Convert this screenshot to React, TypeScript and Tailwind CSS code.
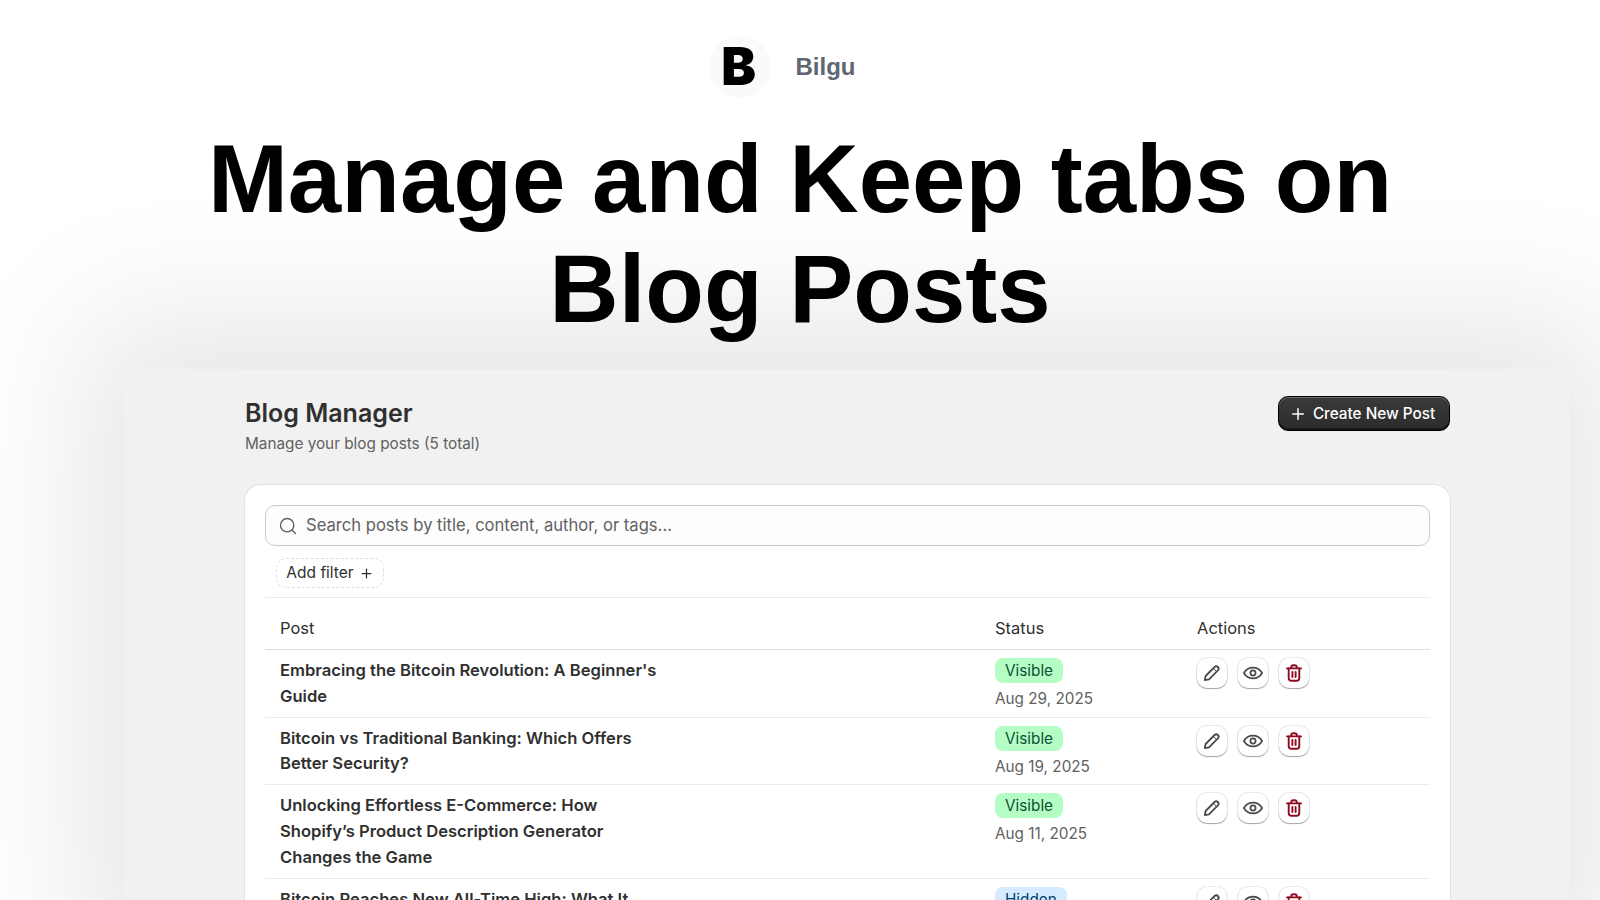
import { Plus, Search } from 'lucide-react'

const posts = [
  { title: ['Embracing the Bitcoin Revolution: A Beginner\'s', 'Guide'], status: 'Visible', date: 'Aug 29, 2025' },
  { title: ['Bitcoin vs Traditional Banking: Which Offers', 'Better Security?'], status: 'Visible', date: 'Aug 19, 2025' },
  {
    title: ['Unlocking Effortless E-Commerce: How', 'Shopify’s Product Description Generator', 'Changes the Game'],
    status: 'Visible',
    date: 'Aug 11, 2025',
  },
  { title: ['Bitcoin Reaches New All-Time High: What It', 'Means for Investors'], status: 'Hidden', date: 'Aug 2, 2025' },
]

const ActionButton = ({ children }: { children: React.ReactNode }) => (
  <button className="flex h-[30px] w-[30px] items-center justify-center rounded-[10px] bg-white shadow-[0_1px_1px_rgba(0,0,0,0.3),0_0_0_1px_rgba(0,0,0,0.08)]">
    {children}
  </button>
)

const EditIcon = () => (
  <svg width="20" height="20" viewBox="0 0 20 20" fill="none" stroke="#4a4a4a" strokeWidth="1.8" strokeLinejoin="round" strokeLinecap="round">
    <path d="M2.8 17.2 L3.6 13 L12.6 4 a2.3 2.3 0 0 1 3.3 3.3 L7 16.4 Z" />
    <path d="M11.4 5.4 l3.1 3.1" strokeWidth="1" />
  </svg>
)

const ViewIcon = () => (
  <svg width="20" height="20" viewBox="0 0 20 20" fill="none" stroke="#4a4a4a" strokeWidth="1.7" strokeLinejoin="round">
    <path d="M0.9 10 C3 6.3 6.2 4.6 10 4.6 s7 1.7 9.1 5.4 c-2.1 3.7-5.3 5.4-9.1 5.4 S3 13.7 0.9 10 Z" />
    <circle cx="10" cy="10" r="2.6" />
  </svg>
)

const DeleteIcon = () => (
  <svg width="20" height="20" viewBox="0 0 20 20" fill="none" stroke="#8e0b21" strokeWidth="1.9" strokeLinecap="round" strokeLinejoin="round">
    <path d="M7.2 5 V4.4 a2.2 2.2 0 0 1 2.2-2.2 h1.2 a2.2 2.2 0 0 1 2.2 2.2 V5" />
    <path d="M3 5.4 h14" />
    <path d="M4.7 5.4 V15 a2.8 2.8 0 0 0 2.8 2.8 h5 a2.8 2.8 0 0 0 2.8-2.8 V5.4" />
    <path d="M8.4 9 v5 M11.6 9 v5" />
  </svg>
)

const Row = ({ title, status, date }: (typeof posts)[number]) => (
  <div className="grid grid-cols-[730px_202px_1fr] border-b border-[#ebebeb] pt-[8px] pb-[7.5px]">
    <div className="pl-[15px] text-[16.6px] leading-[25.6px] font-semibold text-[#303030]">
      {title.map((line) => (
        <div key={line}>{line}</div>
      ))}
    </div>
    <div>
      <span
        className={
          status === 'Visible'
            ? 'block h-[25px] w-fit rounded-lg bg-[#b4fec5] px-[10px] text-[15.3px] leading-[25px] text-[#0c5132]'
            : 'block h-[25px] w-fit rounded-lg bg-[#d5ebff] px-[10px] text-[15.3px] leading-[25px] text-[#00416e]'
        }
      >
        {status}
      </span>
      <div className="mt-[3px] -mb-[8px] text-[15.3px] leading-[25px] text-[#616161]">{date}</div>
    </div>
    <div className="flex gap-[11px]">
      <ActionButton>
        <EditIcon />
      </ActionButton>
      <ActionButton>
        <ViewIcon />
      </ActionButton>
      <ActionButton>
        <DeleteIcon />
      </ActionButton>
    </div>
  </div>
)

const App = () => {
  return (
    <div className="flex h-[900px] flex-col items-center overflow-hidden bg-white font-['Inter',sans-serif]">
      <header className="mt-[36px] flex items-center gap-[25px] pr-[36px] font-['Liberation_Sans',sans-serif]">
        <div className="flex h-[62px] w-[62px] items-center justify-center rounded-full bg-[#fafafa] font-['Inter',sans-serif]">
          <span className="-ml-[2px] text-[52px] leading-none font-black text-black">B</span>
        </div>
        <span className="text-2xl font-bold text-[#5f6671]">Bilgu</span>
      </header>

      <h1 className="mt-[26px] text-center font-['Liberation_Sans',sans-serif] text-[96px] leading-[110px] font-bold text-black">
        Manage and Keep tabs on
        <br />
        Blog Posts
      </h1>

      <main className="mt-[25px] ml-[124px] w-[1446px] flex-1 self-start bg-[#f1f1f1] pt-[27px] pr-[120px] pl-[121px] shadow-[0_-10px_130px_40px_rgba(0,0,0,0.1)]">
        <div className="flex items-start justify-between">
          <div>
            <h2 className="text-[25px] leading-[34px] font-semibold text-[#303030]">Blog Manager</h2>
            <p className="mt-[2px] text-[15.3px] leading-[24px] text-[#616161]">Manage your blog posts (5 total)</p>
          </div>
          <button className="flex h-[35px] w-[172px] items-center justify-center gap-[6px] rounded-[10px] border border-black bg-gradient-to-b from-[#3a3a3a] to-[#2c2c2c] pt-px pr-[4px] text-[15.3px] font-medium text-white shadow-[inset_0_1px_0_rgba(255,255,255,0.25),inset_0_-2px_0_rgba(0,0,0,0.5)]">
            <Plus size={18} strokeWidth={2} />
            Create New Post
          </button>
        </div>

        <section className="mt-[29px] rounded-2xl bg-white px-5 pt-5 shadow-[0_0_0_1px_rgba(0,0,0,0.06)]">
          <div className="flex h-[41px] items-center gap-[8px] rounded-[10px] border border-[#c9c9c9] bg-[#fdfdfd] px-[12px] text-[16.6px] text-[#616161]">
            <Search size={20} strokeWidth={1.7} className="text-[#616161]" />
            Search posts by title, content, author, or tags...
          </div>
          <div className="border-b border-[#ebebeb] pt-[12px] pb-[9px] pl-[11px]">
            <div className="flex h-[30px] w-[108px] items-center justify-center gap-[5px] rounded-[10px] border border-dashed border-[#dedede] text-[15.5px] text-[#303030]">
              Add filter
              <Plus size={15} strokeWidth={2} />
            </div>
          </div>
          <div className="grid h-[52px] grid-cols-[730px_202px_1fr] items-center border-b border-[#dedede] pt-[10px] text-[16.5px] text-[#303030]">
            <div className="pl-[15px]">Post</div>
            <div>Status</div>
            <div>Actions</div>
          </div>
          {posts.map((post) => (
            <Row key={post.date} {...post} />
          ))}
        </section>
      </main>
    </div>
  )
}

export default App
